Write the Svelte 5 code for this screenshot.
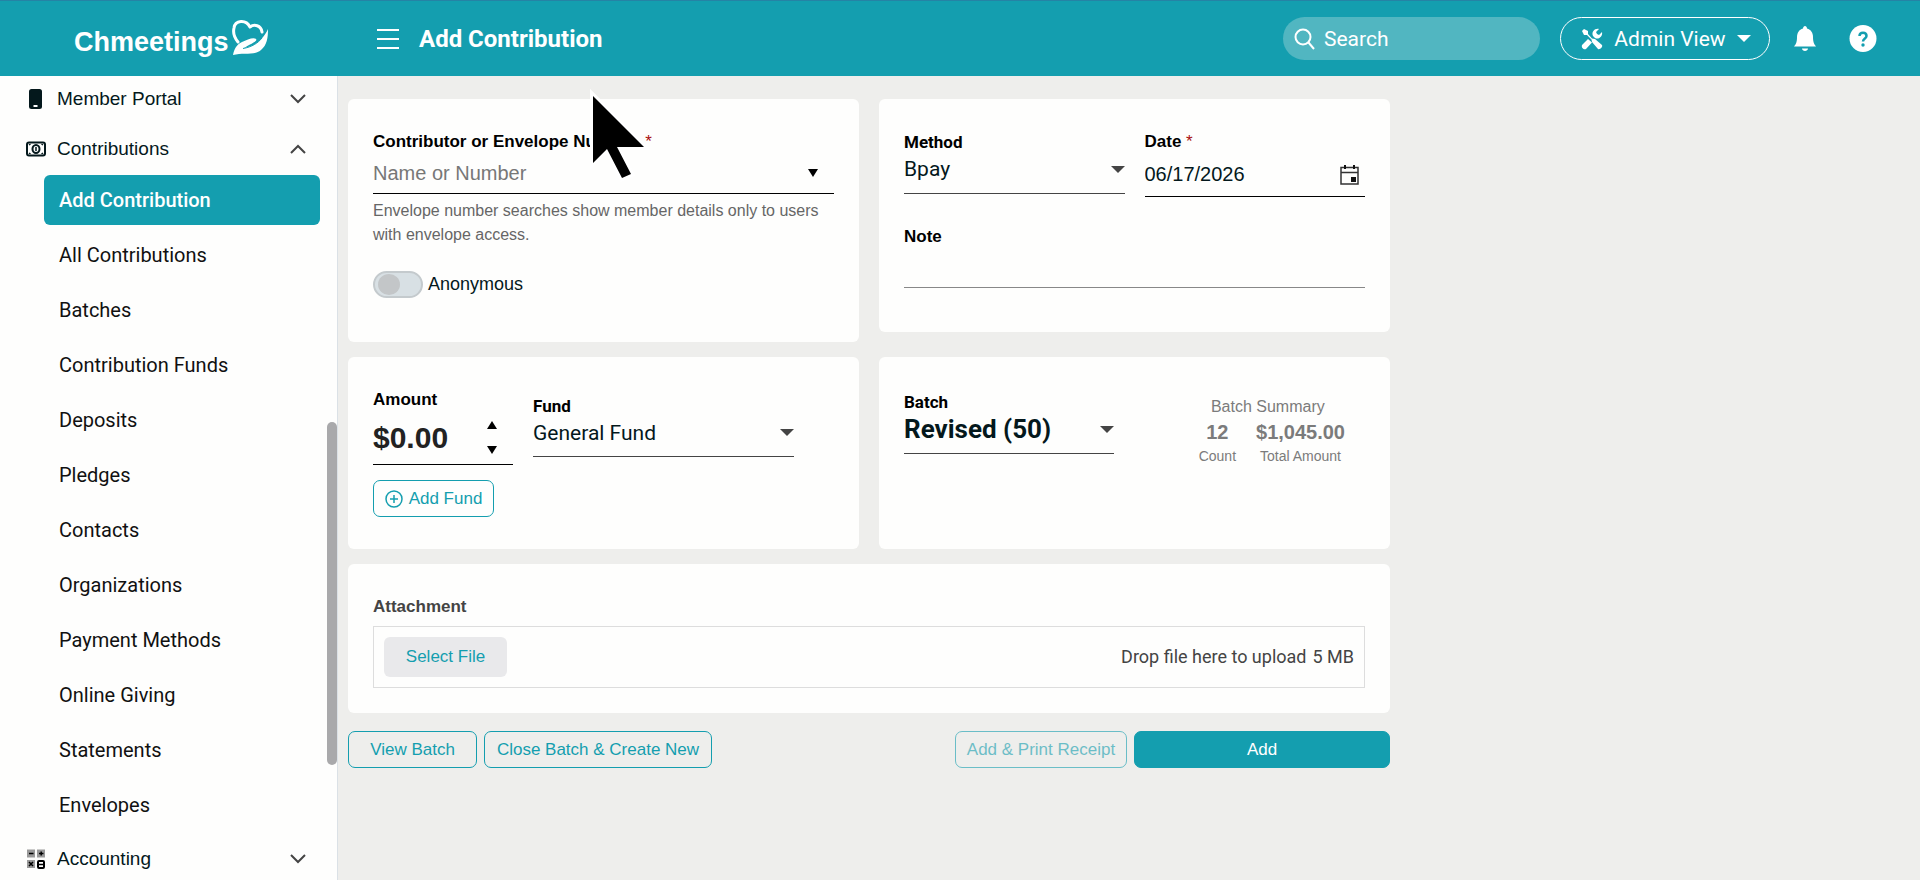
<script lang="ts">
    type Batch = { name: string, count: number, total: string };

    const pages = [
        "Add Contribution",
        "All Contributions",
        "Batches",
        "Contribution Funds",
        "Deposits",
        "Pledges",
        "Contacts",
        "Organizations",
        "Payment Methods",
        "Online Giving",
        "Statements",
        "Envelopes",
    ];
    const batch: Batch = { name: "Revised (50)", count: 12, total: "$1,045.00" };

    let current = "Add Contribution";
    let contributor = "";
    let anonymous = false;
    let date = "06/17/2026";
    let note = "";
    let amount = 0;

    $: amountText = "$" + amount.toFixed(2);

    function step(by: number) {
        amount = Math.max(0, amount + by);
    }
</script>

<div class="app">
    <header class="topbar">
        <a class="brand" href="#home" aria-label="Chmeetings home">
            <span class="brand-name">Chmeetings</span>
            <svg class="brand-mark" viewBox="0 0 38 38" aria-hidden="true">
                <path d="M6 23C2 18 1 13 2 9C3 1 14 0 18 8C22 5 29 6 30 13" fill="none" stroke="#fff" stroke-width="3" stroke-linecap="round" stroke-linejoin="round"/>
                <path d="M1 36C2 30 5 25 10 23C15 21 21 18 24 20C26 22 20 24 12 29C23 27 31 21 36 10C36 19 35 26 29 31C22 37 11 33 1 36Z" fill="#fff"/>
                <path d="M11 29.500C20 28 26 24 30 19" fill="none" stroke="#149eaf"/>
            </svg>
        </a>
        <button class="icon-btn menu" aria-label="Toggle menu">
            <svg width="22" height="20" viewBox="0 0 22 20"><path d="M0 1H22M0 10H22M0 19H22" stroke="#fff" stroke-width="2"/></svg>
        </button>
        <h1>Add Contribution</h1>
        <label class="search">
            <svg width="22" height="22" viewBox="0 0 22 22" fill="none" stroke="#fff" stroke-width="2"><circle cx="9" cy="9" r="7.5"/><path d="M14.500 14.500L20 21"/></svg>
            <input type="search" placeholder="Search" aria-label="Search"/>
        </label>
        <button class="view">
            <svg width="22" height="22" viewBox="0 0 22 22" fill="#fff">
                <path d="M1 3L3 1L7 3V6L11 10.500L14 11L21 17C22 19 19 22 17 21L11 14L10.500 11.500L6 7H3Z"/>
                <path d="M1 17L7 11L11 14.500L5 21C3 22 0 20 1 17ZM12 8C10 4 14 0 18 1L15 4L16 6L18 7L21 4C22 8 18 12 14 10Z"/>
            </svg>
            <span>Admin View</span>
            <i class="caret"></i>
        </button>
        <button class="icon-btn bell" aria-label="Notifications">
            <svg width="22" height="26" viewBox="0 0 22 26" fill="#fff"><path d="M11 0C12 0 13 1 13 2.500C17 3.500 19 7 19 11C19 16 20 18 22 20.500H0C2 18 3 16 3 11C3 7 5 3.500 9 2.500C9 1 10 0 11 0ZM8 22.500H14C14 24 12.500 25 11 25S8 24 8 22.500Z"/></svg>
        </button>
        <button class="icon-btn help" aria-label="Help">
            <svg width="28" height="28" viewBox="0 0 28 28"><circle cx="14" cy="13.500" r="13.500" fill="#fff"/><path d="M10.500 11C10.500 6.500 17.500 6.500 17.500 11C17.500 13.500 14 13.500 14 16.500" fill="none" stroke="#149eaf" stroke-width="2.500"/><circle cx="14" cy="20" r="1.700" fill="#149eaf"/></svg>
        </button>
    </header>

    <div class="body">
        <nav class="sidebar">
            <button class="group">
                <svg width="24" height="20" viewBox="0 0 24 20"><rect x="5" y="0" width="13" height="20" rx="2.500" fill="#04181c"/><rect x="9.500" y="16" width="4" height="2" fill="#fff"/></svg>
                <span>Member Portal</span>
                <svg class="chevron" width="16" height="10" viewBox="0 0 16 10"><path d="M1 1L8 8L15 1"/></svg>
            </button>
            <button class="group open">
                <svg width="24" height="20" viewBox="0 0 24 20" fill="none" stroke="#04181c"><rect x="3" y="3.500" width="18" height="13" rx="2" stroke-width="2"/><ellipse cx="12" cy="10" rx="3.500" ry="4" stroke-width="2"/><path d="M12 8V12M5 6L6.500 5M19 6L17.500 5M5 14L6.500 15M19 14L17.500 15" stroke-width="1.500"/></svg>
                <span>Contributions</span>
                <svg class="chevron" width="16" height="10" viewBox="0 0 16 10"><path d="M1 9L8 2L15 9"/></svg>
            </button>
            <ul>
                {#each pages as page}
                    <li><a href="#{page}" class:active={page == current} on:click={_ => current = page}>{page}</a></li>
                {/each}
            </ul>
            <button class="group">
                <svg width="24" height="20" viewBox="0 0 24 20"><path d="M3 .5H11V8.500H3ZM13 .5H21V8.500H13ZM3 11H11V19H3Z" fill="#999"/><rect x="14" y="12" width="6" height="7" rx="1" fill="none" stroke="#000" stroke-width="2"/><path d="M5 4.500H9.500M15 4.500H19.500M17.200 2.500V6.500M5 13L9 17M9 13L5 17M14 15.500H20" stroke="#000" stroke-width="1.500"/></svg>
                <span>Accounting</span>
                <svg class="chevron" width="16" height="10" viewBox="0 0 16 10"><path d="M1 1L8 8L15 1"/></svg>
            </button>
            <div class="scroll-thumb"></div>
        </nav>

        <main>
            <form on:submit|preventDefault>
                <section class="card contributor">
                    <label class="title" for="contributor">Contributor or Envelope Number <sup>*</sup></label>
                    <div class="line dark">
                        <input id="contributor" placeholder="Name or Number" bind:value={contributor}/>
                        <i class="caret black"></i>
                    </div>
                    <p class="hint">Envelope number searches show member details only to users with envelope access.</p>
                    <label class="switch">
                        <input type="checkbox" bind:checked={anonymous}/>
                        <span>Anonymous</span>
                    </label>
                </section>

                <section class="card payment">
                    <div class="pair">
                        <div class="field">
                            <label class="title roboto" for="method">Method</label>
                            <div class="line select">
                                <select id="method"><option>Bpay</option></select>
                                <i class="caret"></i>
                            </div>
                        </div>
                        <div class="field">
                            <label class="title" for="date">Date <sup>*</sup></label>
                            <div class="line dark">
                                <input id="date" bind:value={date}/>
                                <button class="icon-btn calendar" type="button" aria-label="Pick a date">
                                    <svg width="20" height="20" viewBox="0 0 20 20"><path d="M1 2.500H18V19H1ZM1 7.500H18" fill="none" stroke="#333" stroke-width="1.500"/><path d="M4 0H6V4H4ZM13 0H15V4H13ZM11 12H16V17H11Z" fill="#111"/></svg>
                                </button>
                            </div>
                        </div>
                    </div>
                    <label class="title" for="note">Note</label>
                    <div class="line light"><input id="note" bind:value={note}/></div>
                </section>

                <section class="card fund">
                    <div class="amount">
                        <label class="title" for="amount">Amount</label>
                        <div class="line dark">
                            <input id="amount" value={amountText}/>
                            <div class="spinner">
                                <button type="button" aria-label="Increase" on:click={_ => step(1)}><i class="caret black up"></i></button>
                                <button type="button" aria-label="Decrease" on:click={_ => step(-1)}><i class="caret black"></i></button>
                            </div>
                        </div>
                        <button class="btn add-fund" type="button">
                            <svg width="18" height="18" viewBox="0 0 18 18" fill="none" stroke="#149eaf" stroke-width="1.500"><circle cx="9" cy="9" r="8"/><path d="M9 5V13M5 9H13"/></svg>
                            Add Fund
                        </button>
                    </div>
                    <div class="fund-pick">
                        <label class="title roboto" for="fund">Fund</label>
                        <div class="line select">
                            <select id="fund"><option>General Fund</option></select>
                            <i class="caret"></i>
                        </div>
                    </div>
                </section>

                <section class="card batch">
                    <div class="batch-pick">
                        <label class="title roboto" for="batch">Batch</label>
                        <div class="line select">
                            <select id="batch"><option>{batch.name}</option></select>
                            <i class="caret"></i>
                        </div>
                    </div>
                    <div class="summary">
                        <p>Batch Summary</p>
                        <dl>
                            <div><dd>{batch.count}</dd><dt>Count</dt></div>
                            <div><dd>{batch.total}</dd><dt>Total Amount</dt></div>
                        </dl>
                    </div>
                </section>

                <section class="card attachment">
                    <h2 class="title">Attachment</h2>
                    <div class="drop">
                        <button type="button">Select File</button>
                        <p><span>Drop file here to upload</span><span>5 MB</span></p>
                    </div>
                </section>

                <div class="actions">
                    <button class="btn view-batch" type="button">View Batch</button>
                    <button class="btn close-batch" type="button">Close Batch &amp; Create New</button>
                    <button class="btn print" type="button" disabled>Add &amp; Print Receipt</button>
                    <button class="btn add">Add</button>
                </div>
            </form>
        </main>
    </div>

    <svg class="pointer" width="56" height="88" viewBox="0 0 56 88" aria-hidden="true"><path d="M1 2V69L15 55L30 84L39 80L25 53H52Z"/></svg>
</div>

<style>
    :global(body) {
        background: #eeeeec;
    }

    .app {
        position: relative;
        display: flex;
        flex-direction: column;
        height: 100vh;
        overflow: hidden;
        font-family: "Liberation Sans", Arial, sans-serif;
        font-size: 18px;
        color: #04181c;
    }

    .app * {
        box-sizing: border-box;
    }

    button, input, select {
        margin: 0;
        padding: 0;
        border: 0;
        background: none;
        font: inherit;
        color: inherit;
        outline: none;
    }

    input, select {
        appearance: none;
        flex: 1;
        min-width: 0;
        width: 100%;
    }

    svg {
        flex: none;
        display: block;
    }

    .topbar {
        flex: none;
        display: flex;
        align-items: center;
        height: 76px;
        padding-right: 43px;
        background: #149eaf;
        border-top: 1px solid #2583a5;
        color: #fff;
        font-family: Roboto, sans-serif;
    }

    .brand {
        display: flex;
        gap: 3px;
        width: 377px;
        padding-left: 74px;
        color: #fff;
        text-decoration: none;
    }

    .brand-name {
        padding-top: 7px;
        font: bold 27px/32px "Liberation Sans", Arial, sans-serif;
    }

    .brand-mark {
        width: 38px;
        height: 38px;
    }

    .menu {
        width: 42px;
    }

    h1 {
        flex: 1;
        margin: 0;
        font: bold 24px/32px Roboto, sans-serif;
    }

    .search {
        display: flex;
        align-items: center;
        gap: 8px;
        width: 257px;
        height: 43px;
        padding: 0 11px;
        border-radius: 22px;
        background: #51b6c1;
        font-size: 21px;
    }

    .search input::placeholder {
        color: #fff;
        opacity: 1;
    }

    .view {
        display: flex;
        align-items: center;
        justify-content: space-between;
        width: 210px;
        height: 43px;
        margin: 0 24px 0 20px;
        padding: 0 18px 0 20px;
        border: 1px solid #fff;
        border-radius: 22px;
        font-size: 21px;
    }

    .help {
        margin-left: 33px;
    }

    .caret {
        flex: none;
        border: 7px solid transparent;
        border-top-color: #444;
        border-bottom: 0;
    }

    .view .caret {
        border-top-color: #fff;
    }

    .caret.black {
        border-width: 8px 5px 0;
        border-top-color: #000;
    }

    .caret.up {
        transform: rotate(180deg);
    }

    .body {
        flex: 1;
        display: flex;
        min-height: 0;
    }

    .sidebar {
        position: relative;
        flex: none;
        width: 338px;
        background: #fefefd;
        border-right: 1px solid #dbe1e6;
    }

    .group {
        display: flex;
        align-items: center;
        gap: 9px;
        width: 100%;
        height: 46px;
        padding: 0 31px 0 24px;
        font-size: 19px;
        text-align: left;
    }

    .group.open {
        height: 53px;
    }

    .group span {
        flex: 1;
    }

    .chevron {
        fill: none;
        stroke: #444;
        stroke-width: 2;
    }

    ul {
        margin: 0 0 1px;
        padding: 0 17px 0 44px;
        list-style: none;
    }

    li {
        height: 55px;
    }

    li a {
        display: block;
        height: 50px;
        padding-left: 15px;
        border-radius: 6px;
        font: 20px/50px Roboto, sans-serif;
        color: #111;
        text-decoration: none;
    }

    li a.active {
        background: #149eaf;
        color: #fff;
        font-weight: 500;
    }

    .scroll-thumb {
        position: absolute;
        top: 346px;
        right: 0;
        width: 10px;
        height: 343px;
        border-radius: 5px;
        background: #a9a9ab;
    }

    main {
        flex: 1;
        padding: 23px 10px;
    }

    form {
        display: grid;
        grid-template-columns: 1fr 1fr;
        gap: 15px 20px;
        align-items: start;
        max-width: 1042px;
    }

    .card {
        padding: 32px 25px 25px;
        border-radius: 6px;
        background: #fefefd;
    }

    .title {
        display: block;
        margin: 0;
        font-size: 17px;
        font-weight: bold;
        line-height: 22px;
        color: #000;
    }

    .roboto {
        font-family: Roboto, sans-serif;
    }

    sup {
        font-size: 17px;
        font-weight: normal;
        line-height: 0;
        vertical-align: baseline;
        color: #a11;
    }

    .line {
        display: flex;
        align-items: center;
        height: 41px;
        border-bottom: 1px solid #444;
        font-size: 20px;
    }

    .line.dark {
        border-color: #000;
    }

    .line.light {
        height: 40px;
        border-color: #888;
    }

    .line.select {
        padding-bottom: 8px;
        font-family: Roboto, sans-serif;
        font-size: 21px;
    }

    .contributor {
        height: 243px;
    }

    .contributor sup {
        margin-left: 3px;
    }

    .contributor .line {
        padding-right: 16px;
    }

    ::placeholder {
        color: #777;
        opacity: 1;
    }

    .hint {
        margin: 5px 0 24px;
        font-size: 16px;
        line-height: 24px;
        color: #666;
    }

    .switch {
        display: flex;
        align-items: center;
        gap: 5px;
    }

    .switch input {
        flex: none;
        width: 50px;
        height: 27px;
        padding: 1px 3px;
        border: 2px solid #c4cacd;
        border-radius: 14px;
        background: #d8e0e4;
    }

    .switch input::before {
        content: "";
        display: block;
        width: 22px;
        height: 21px;
        border-radius: 50%;
        background: #c3c6c8;
    }

    .switch input:checked::before {
        margin-left: auto;
    }

    .payment {
        height: 233px;
    }

    .pair {
        display: grid;
        grid-template-columns: 1fr 1fr;
        align-items: start;
        gap: 20px;
        height: 95px;
    }

    .payment .dark {
        height: 44px;
        padding-right: 5px;
    }

    .fund, .batch {
        display: flex;
        height: 192px;
    }

    .amount {
        width: 140px;
        margin-right: 20px;
    }

    .amount .line {
        height: 54px;
        padding-right: 16px;
        font-size: 30px;
        font-weight: bold;
        color: #222;
    }

    .spinner {
        display: flex;
        flex-direction: column;
        gap: 17px;
    }

    .spinner button {
        display: flex;
    }

    .fund-pick {
        width: 261px;
        padding-top: 6px;
    }

    .batch-pick {
        width: 210px;
        padding-top: 2px;
    }

    .fund-pick .line {
        height: 40px;
    }

    .batch .line {
        font-size: 26px;
        font-weight: bold;
    }

    .batch {
        justify-content: space-between;
    }

    .summary {
        margin-right: 20px;
        padding-top: 6px;
        color: #7b7b7b;
        font-size: 16px;
        text-align: center;
    }

    .summary p {
        margin: 0;
        padding-right: 8px;
        line-height: 24px;
    }

    dl {
        display: flex;
        gap: 20px;
        margin: 0;
    }

    dl div {
        display: flex;
        flex-direction: column;
    }

    dd {
        margin: 0;
        font-size: 20px;
        font-weight: bold;
        line-height: 27px;
    }

    dt {
        font-size: 14px;
        line-height: 20px;
    }

    .btn {
        height: 37px;
        border: 1px solid #149eaf;
        border-radius: 7px;
        color: #149eaf;
        font-size: 17px;
    }

    .add-fund {
        display: flex;
        align-items: center;
        justify-content: center;
        gap: 6px;
        width: 121px;
        margin-top: 15px;
    }

    .attachment {
        grid-column: 1 / -1;
    }

    .attachment .title {
        color: #444;
    }

    .drop {
        display: flex;
        align-items: center;
        justify-content: space-between;
        height: 62px;
        margin-top: 8px;
        padding: 0 10px;
        border: 1px solid #ddd;
        font: 18px/24px Roboto, sans-serif;
        color: #444;
    }

    .drop p {
        display: flex;
        gap: 6px;
        margin: 0;
    }

    .drop button {
        width: 123px;
        height: 40px;
        border-radius: 6px;
        background: #e9e9eb;
        font: 17px "Liberation Sans", Arial, sans-serif;
        color: #149eaf;
    }

    .actions {
        grid-column: 1 / -1;
        display: flex;
        gap: 7px;
        margin-top: 3px;
    }

    .view-batch {
        width: 129px;
    }

    .close-batch {
        width: 228px;
    }

    .print {
        width: 172px;
        margin-left: auto;
        opacity: 0.6;
    }

    .add {
        width: 256px;
        background: #149eaf;
        color: #fff;
    }

    /* white halo keeps the arrow readable over text */
    .pointer {
        position: absolute;
        top: 94px;
        left: 592px;
        overflow: visible;
        stroke: #fff;
        stroke-width: 6;
        paint-order: stroke;
        pointer-events: none;
    }
</style>
